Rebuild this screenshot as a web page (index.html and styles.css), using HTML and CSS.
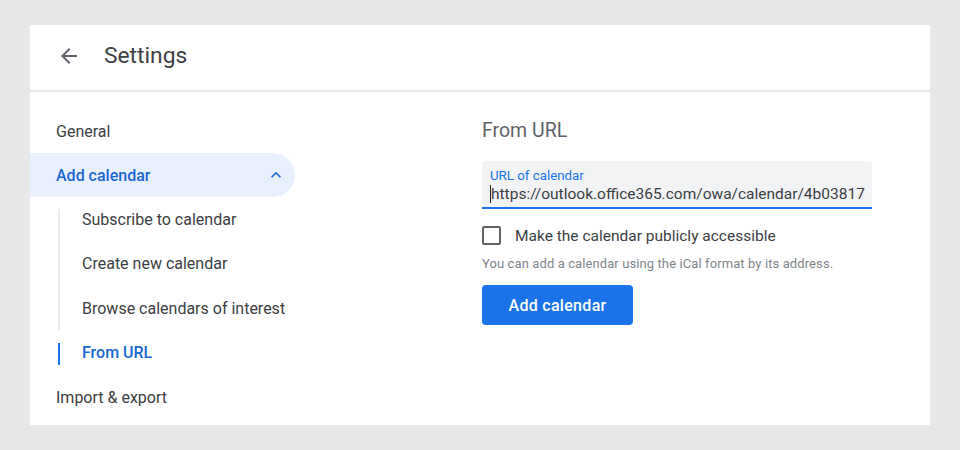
FILE: index.html
```html
<!DOCTYPE html>
<html lang="en">
<head>
    <meta charset="utf-8">
    <title>Settings</title>
    <link rel="stylesheet" href="styles.css">
</head>
<body>
<div class="card">
    <div class="header">
        <svg class="back-icon" viewBox="0 0 24 24" width="24" height="24"><path d="M20 11H7.83l5.59-5.59L12 4l-8 8 8 8 1.41-1.41L7.83 13H20v-2z"/></svg>
        <span class="title">Settings</span>
    </div>
    <div class="content">
        <div class="sidebar">
            <div class="nav-item">General</div>
            <div class="nav-item active">
                <span>Add calendar</span>
                <svg class="chevron" viewBox="0 0 24 24" width="20" height="20"><path d="M7.41 15.41 12 10.83l4.59 4.58L18 14l-6-6-6 6z"/></svg>
            </div>
            <div class="subnav">
                <div class="sub-item">Subscribe to calendar</div>
                <div class="sub-item">Create new calendar</div>
                <div class="sub-item">Browse calendars of interest</div>
                <div class="sub-item current">From URL</div>
            </div>
            <div class="nav-item">Import &amp; export</div>
        </div>
        <div class="main">
            <div class="section-title">From URL</div>
            <div class="field">
                <div class="field-label">URL of calendar</div>
                <div class="field-value"><span class="caret"></span>https://outlook.office365.com/owa/calendar/4b03817</div>
            </div>
            <label class="check-row">
                <span class="checkbox"></span>
                <span>Make the calendar publicly accessible</span>
            </label>
            <div class="hint">You can add a calendar using the iCal format by its address.</div>
            <button class="add-btn">Add calendar</button>
        </div>
    </div>
</div>
</body>
</html>
```

FILE: styles.css
```css
body {
    margin: 0;
    padding: 25px 30px;
    background-color: #e8e8ea;
    font-family: Roboto, "Noto Sans", Arial, sans-serif;
    color: #3c4043;
}
.card {
    background-color: white;
    width: 900px;
    height: 400px;
    overflow: hidden;
}
.header {
    display: flex;
    align-items: center;
    height: 61px;
    padding: 0 0 4px 27px;
    border-bottom: 2px solid #e8e8ea;
}
.back-icon {
    fill: #5f6368;
}
.title {
    margin-left: 23px;
    font-size: 22.8px;
    color: #3c4043;
}
.content {
    display: flex;
}
.sidebar {
    width: 265px;
    padding-top: 17px;
}
.nav-item {
    display: flex;
    align-items: center;
    justify-content: space-between;
    height: 44px;
    padding: 0 9px 0 26px;
    font-size: 16px;
    color: #3c4043;
}
.nav-item.active {
    background-color: #e8f0fe;
    border-radius: 0 22px 22px 0;
    color: #1967d2;
    font-weight: 500;
}
.chevron {
    fill: #1967d2;
}
.subnav {
    position: relative;
    margin-left: 28px;
}
.subnav::before {
    content: "";
    position: absolute;
    left: 0;
    top: 12px;
    width: 2px;
    height: 121px;
    background-color: #e8eaed;
}
.sub-item {
    position: relative;
    display: flex;
    align-items: center;
    height: 44.5px;
    padding-left: 24px;
    font-size: 16px;
}
.sub-item.current {
    color: #1967d2;
    font-weight: 500;
}
.sub-item.current::before {
    content: "";
    position: absolute;
    left: 0;
    top: 12px;
    width: 2px;
    height: 22px;
    background-color: #1a73e8;
}
.main {
    margin-left: 187px;
    padding-top: 27px;
    width: 390px;
}
.section-title {
    font-size: 19.5px;
    line-height: 24px;
    color: #5f6368;
}
.field {
    margin-top: 18px;
    height: 46px;
    background-color: #f1f3f4;
    border-bottom: 2px solid #1a73e8;
    border-radius: 4px 4px 0 0;
    padding-left: 8px;
}
.field-label {
    padding-top: 8px;
    font-size: 13.3px;
    line-height: 14px;
    color: #1a73e8;
}
.field-value {
    display: flex;
    align-items: center;
    font-size: 15.5px;
    line-height: 22px;
    color: #3c4043;
    white-space: nowrap;
}
.caret {
    width: 1px;
    height: 18px;
    background-color: #202124;
}
.check-row {
    display: flex;
    align-items: center;
    margin-top: 17px;
    font-size: 15.5px;
}
.checkbox {
    width: 15px;
    height: 15px;
    border: 2px solid #5f6368;
    border-radius: 2px;
    margin-right: 14px;
}
.hint {
    margin-top: 11px;
    font-size: 13px;
    letter-spacing: 0.1px;
    color: #80868b;
}
.add-btn {
    margin-top: 14px;
    width: 151px;
    height: 40px;
    border: none;
    border-radius: 4px;
    background-color: #1a73e8;
    color: white;
    font-family: Roboto, "Noto Sans", Arial, sans-serif;
    font-size: 16px;
    font-weight: 500;
    letter-spacing: 0.3px;
    cursor: pointer;
}
```
